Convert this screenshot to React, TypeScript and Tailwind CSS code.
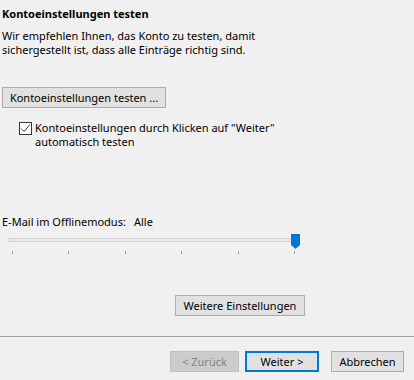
const ticks = [0, 1, 2, 3, 4, 5];

const WinButton = ({
  label,
  className = "",
}: {
  label: string;
  className?: string;
}) => (
  <button
    className={`h-[21px] border border-[#adadad] bg-[#e1e1e1] text-[11px] leading-[14px] text-black ${className}`}
  >
    {label}
  </button>
);

export default function App() {
  return (
    <div
      className="flex h-[380px] w-[414px] flex-col bg-[#f0f0f0] text-[11px] leading-[14px] text-black"
      style={{ fontFamily: '"Noto Sans", "Segoe UI", sans-serif' }}
    >
      <div className="px-[2px]">
        {/* Header */}
        <h1 className="mt-[7px] font-bold">Kontoeinstellungen testen</h1>
        <p className="mt-[8px]">
          Wir empfehlen Ihnen, das Konto zu testen, damit
          <br />
          sichergestellt ist, dass alle Einträge richtig sind.
        </p>

        <WinButton
          label="Kontoeinstellungen testen ..."
          className="mt-[30px] w-[164px]"
        />

        {/* Auto test checkbox */}
        <div className="mt-[13px] flex gap-[3px] pl-[17px]">
          <span className="mt-[1px] flex h-[13px] w-[13px] shrink-0 items-center justify-center border border-[#333333] bg-white">
            <svg width="11" height="11" viewBox="0 0 11 11">
              <path
                d="M1 5.5 L4 8.5 L10 1.5"
                fill="none"
                stroke="#333"
                strokeWidth="1"
              />
            </svg>
          </span>
          <p>
            Kontoeinstellungen durch Klicken auf "Weiter"
            <br />
            automatisch testen
          </p>
        </div>

        {/* Offline mode slider */}
        <div className="mt-[66px] flex">
          <span className="w-[132px]">E-Mail im Offlinemodus:</span>
          <span>Alle</span>
        </div>
        <div className="relative mt-[9px] ml-[6px] h-[4px] w-[290px] border border-[#d6d6d6] bg-[#e7eaea]">
          <svg
            className="absolute left-[282px] top-[-5px]"
            width="9"
            height="15"
            viewBox="0 0 9 15"
          >
            <path d="M0 0 H9 V11 L4.5 15 L0 11 Z" fill="#0078d7" />
          </svg>
        </div>
        <div className="mt-[9px] ml-[10px] flex w-[283px] justify-between">
          {ticks.map((t) => (
            <span key={t} className="h-[3px] w-[1px] bg-[#a0a0a0]" />
          ))}
        </div>

        <WinButton
          label="Weitere Einstellungen"
          className="mt-[41px] ml-[173px] w-[130px]"
        />
      </div>

      {/* Footer */}
      <div className="mt-[20px] h-[1px] w-full bg-[#a0a0a0]" />
      <div className="mt-[14px] flex pl-[170px]">
        <button className="h-[21px] w-[69px] border border-[#bfbfbf] bg-[#cccccc] text-[#838383]">
          &lt; Zurück
        </button>
        <button className="ml-[6px] h-[21px] w-[74px] border-2 border-[#0078d7] bg-[#e1e1e1]">
          Weiter &gt;
        </button>
        <WinButton label="Abbrechen" className="ml-[12px] w-[73px]" />
      </div>
    </div>
  );
}
